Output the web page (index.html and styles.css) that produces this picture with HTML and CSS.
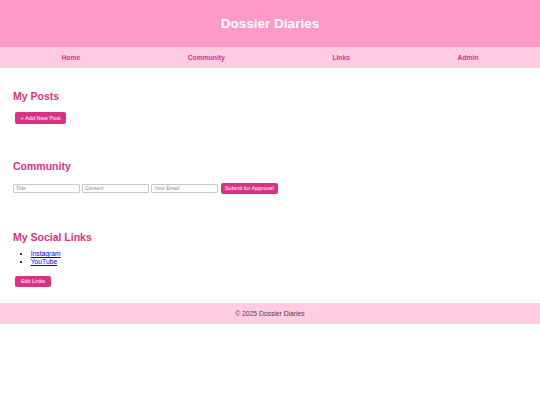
FILE: index.html
```html
<!DOCTYPE html>
<html lang="en">
<head>
<meta charset="utf-8">
<title>Dossier Diaries</title>
<link rel="stylesheet" href="styles.css">
</head>
<body>
<header class="site-header">
  <h1 class="site-title">Dossier Diaries</h1>
</header>
<nav class="site-nav">
  <a href="#" class="nav-link">Home</a>
  <a href="#" class="nav-link">Community</a>
  <a href="#" class="nav-link">Links</a>
  <a href="#" class="nav-link">Admin</a>
</nav>
<main class="content">
  <section class="section section-posts">
    <h2 class="section-title">My Posts</h2>
    <button class="btn btn-add">+ Add New Post</button>
  </section>
  <section class="section section-community">
    <h2 class="section-title">Community</h2>
    <form class="submit-row">
      <input class="field" type="text" placeholder="Title">
      <input class="field" type="text" placeholder="Content">
      <input class="field" type="email" placeholder="Your Email">
      <button class="btn btn-submit" type="button">Submit for Approval</button>
    </form>
  </section>
  <section class="section section-links">
    <h2 class="section-title">My Social Links</h2>
    <ul class="link-list">
      <li><a href="#">Instagram</a></li>
      <li><a href="#">YouTube</a></li>
    </ul>
    <button class="btn btn-edit">Edit Links</button>
  </section>
</main>
<footer class="site-footer">© 2025 Dossier Diaries</footer>
</body>
</html>
```

FILE: styles.css
```css
* { box-sizing: border-box; }

body {
  margin: 0;
  font-family: "Liberation Sans", Arial, sans-serif;
  background: #ffffff;
  color: #000;
}

.site-header {
  height: 47px;
  background: #ff99c8;
  display: flex;
  align-items: center;
  justify-content: center;
}

.site-title {
  margin: 0;
  font-size: 13.5px;
  font-weight: bold;
  color: #ffffff;
  line-height: 16px;
}

.site-nav {
  height: 21px;
  background: #ffcce1;
  display: flex;
  align-items: center;
  justify-content: center;
  gap: 107.5px;
}

.nav-link {
  font-size: 6.75px;
  font-weight: bold;
  color: #d63384;
  text-decoration: none;
}

.section {
  padding: 21.5px 13px 14.8px;
}

.section-title {
  margin: 0;
  font-size: 10.5px;
  line-height: 12px;
  font-weight: bold;
  color: #d63384;
}

.btn {
  display: block;
  border: none;
  border-radius: 2px;
  background: #d63384;
  color: #ffffff;
  font-family: "Liberation Sans", Arial, sans-serif;
  font-size: 5.6px;
  line-height: 6.4px;
  padding: 2.6px 5.6px;
  margin-left: 2px;
}

.btn-add { margin-top: 10.5px; }

.submit-row {
  margin: 11px 0 0;
  display: flex;
  align-items: center;
  gap: 2.3px;
}

.field {
  width: 66.7px;
  height: 9px;
  border: 1px solid #c8c8c8;
  border-radius: 1px;
  padding: 0 2px;
  font-family: "Liberation Sans", Arial, sans-serif;
  font-size: 5.3px;
  margin: 0;
  margin-top: -0.8px;
  background: #fff;
}

.field:first-child { margin-left: 0; }

.field::placeholder { color: #8a8a8a; }

.btn-submit {
  margin-left: 0.7px;
  padding: 2.5px 4.2px;
}

.link-list {
  margin: 7.4px 0 0;
  padding-left: 17.7px;
  font-size: 6.75px;
  line-height: 7.8px;
}

.link-list a { color: #0000ee; }

.btn-edit {
  margin-top: 10.5px;
  margin-left: 2.3px;
  padding: 2.4px 5.6px;
}

.section-links { padding-bottom: 16px; }

.site-footer {
  height: 20.7px;
  background: #ffcce1;
  display: flex;
  align-items: center;
  justify-content: center;
  font-size: 6.75px;
  color: #444;
}
```
